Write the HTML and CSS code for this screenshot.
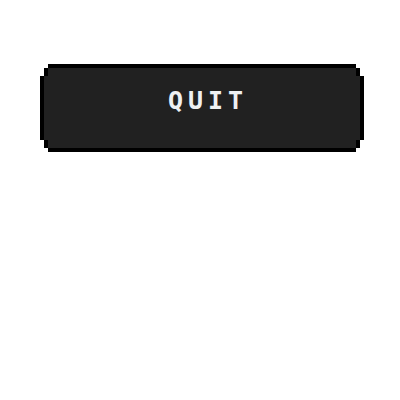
FILE: index.html
```html
<!DOCTYPE html>
<html>
<head>
<meta charset="utf-8">
<link rel="stylesheet" href="styles.css">
</head>
<body>
<div class="page">
  <div class="btn">
    <div class="btn-face"><span class="label">QUIT</span></div>
  </div>
</div>
</body>
</html>
```
FILE: styles.css
```css
html, body {
  margin: 0;
  padding: 0;
  background: #ffffff;
}
.page {
  padding: 64px 0 0 40px;
}
.btn {
  width: 324px;
  height: 88px;
  box-sizing: border-box;
  padding: 4px;
  background: #000;
  clip-path: polygon(8px 0, calc(100% - 8px) 0, calc(100% - 8px) 4px, calc(100% - 4px) 4px, calc(100% - 4px) 12px, 100% 12px, 100% calc(100% - 12px), calc(100% - 4px) calc(100% - 12px), calc(100% - 4px) calc(100% - 4px), calc(100% - 8px) calc(100% - 4px), calc(100% - 8px) 100%, 8px 100%, 8px calc(100% - 4px), 4px calc(100% - 4px), 4px calc(100% - 12px), 0 calc(100% - 12px), 0 12px, 4px 12px, 4px 4px, 8px 4px);
}
.btn-face {
  height: 100%;
  background: #212121;
  display: flex;
  justify-content: center;
  align-items: flex-start;
  box-sizing: border-box;
  padding: 20px 0 0 12px;
  clip-path: polygon(4px 0, calc(100% - 4px) 0, calc(100% - 4px) 8px, 100% 8px, 100% calc(100% - 8px), calc(100% - 4px) calc(100% - 8px), calc(100% - 4px) 100%, 4px 100%, 4px calc(100% - 8px), 0 calc(100% - 8px), 0 8px, 4px 8px);
}
.label {
  font-family: "DejaVu Sans Mono", monospace;
  font-weight: bold;
  font-size: 25px;
  line-height: 25px;
  letter-spacing: 5px;
  color: #eef0f3;
}
```
